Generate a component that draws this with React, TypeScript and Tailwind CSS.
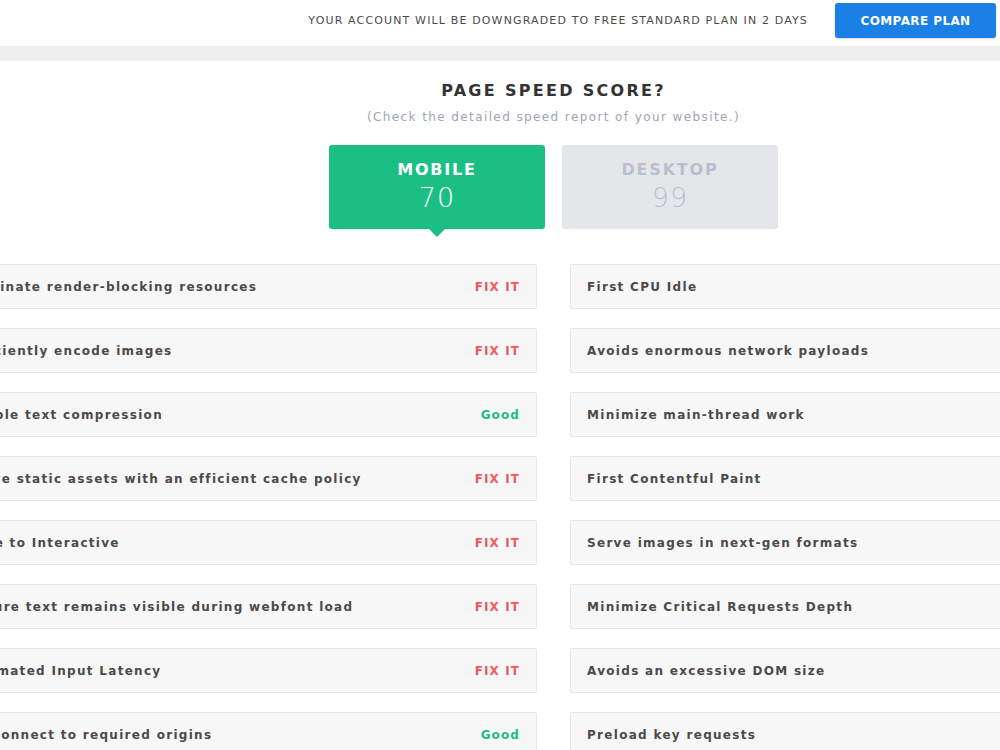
import React from "react";

const FONT = { fontFamily: '"DejaVu Sans", "Noto Sans", sans-serif' };

const LEFT = [
  { label: "Eliminate render-blocking resources", status: "fix" },
  { label: "Efficiently encode images", status: "fix" },
  { label: "Enable text compression", status: "good" },
  { label: "Serve static assets with an efficient cache policy", status: "fix" },
  { label: "Time to Interactive", status: "fix" },
  { label: "Ensure text remains visible during webfont load", status: "fix" },
  { label: "Estimated Input Latency", status: "fix" },
  { label: "Preconnect to required origins", status: "good" },
];

const RIGHT = [
  "First CPU Idle",
  "Avoids enormous network payloads",
  "Minimize main-thread work",
  "First Contentful Paint",
  "Serve images in next-gen formats",
  "Minimize Critical Requests Depth",
  "Avoids an excessive DOM size",
  "Preload key requests",
];

function Row({ label, status }: { label: string; status?: string }) {
  return (
    <div className="h-[45px] flex items-center justify-between px-4 bg-[#f7f7f7] border border-[#e6e6e6] rounded-[2px]">
      <span className="text-[12px] font-bold text-[#4a4a4a] tracking-[1.3px] whitespace-nowrap">{label}</span>
      {status === "fix" && (
        <span className="text-[12px] font-bold text-[#f0595b] tracking-[1.1px]">FIX IT</span>
      )}
      {status === "good" && (
        <span className="text-[12px] font-bold text-[#1fbd80] tracking-[1.1px]">Good</span>
      )}
    </div>
  );
}

export default function App() {
  return (
    <div className="w-[1000px] h-[750px] overflow-hidden bg-white" style={FONT}>
      {/* Top bar */}
      <header className="h-[46px] flex items-start justify-end pr-[4px] gap-[27px]">
        <p className="mt-[13px] text-[11px] font-medium text-[#4a4a4a] tracking-[1.15px] whitespace-nowrap">
          YOUR ACCOUNT WILL BE DOWNGRADED TO FREE STANDARD PLAN IN 2 DAYS
        </p>
        <button className="mt-[3px] w-[161px] h-[35px] rounded-[3px] bg-[#1a80e5] text-white text-[12px] font-bold tracking-[0.4px] shadow-[0_1px_2px_rgba(0,0,0,0.15)]">
          COMPARE PLAN
        </button>
      </header>
      <div className="h-[15px] bg-[#efefef]" />

      {/* Content */}
      <div className="w-[1209px] ml-[-51px] flex flex-col items-center">
        <h1 className="mt-[18px] text-[16px] font-bold text-[#333] tracking-[2.3px]">PAGE SPEED SCORE?</h1>
        <p className="mt-[5px] text-[12px] font-medium text-[#9ba6b9] tracking-[1.4px]">
          (Check the detailed speed report of your website.)
        </p>

        <div className="mt-[19px] flex gap-[17px]">
          <div className="relative w-[216px] h-[84px] rounded-[3px] bg-[#1bbf83] flex flex-col items-center pt-[13px] text-white">
            <span className="text-[16px] font-bold tracking-[1.8px]">MOBILE</span>
            <span className="text-[27px] font-light leading-[31px] tracking-[1px]">70</span>
            <span className="absolute left-1/2 -translate-x-1/2 top-full w-0 h-0 border-l-[8px] border-r-[8px] border-t-[8px] border-l-transparent border-r-transparent border-t-[#1bbf83]" />
          </div>
          <div className="w-[216px] h-[84px] rounded-[3px] bg-[#e4e6ea] flex flex-col items-center pt-[13px] text-[#b9c0cc]">
            <span className="text-[16px] font-bold tracking-[1.8px]">DESKTOP</span>
            <span className="text-[27px] font-light leading-[31px] tracking-[1px]">99</span>
          </div>
        </div>

        <div className="mt-[35px] grid grid-cols-[588px_588px] gap-x-[33px] gap-y-[19px] w-full">
          {LEFT.map((l, i) => (
            <React.Fragment key={i}>
              <Row label={l.label} status={l.status} />
              <Row label={RIGHT[i]} />
            </React.Fragment>
          ))}
        </div>
      </div>
    </div>
  );
}
